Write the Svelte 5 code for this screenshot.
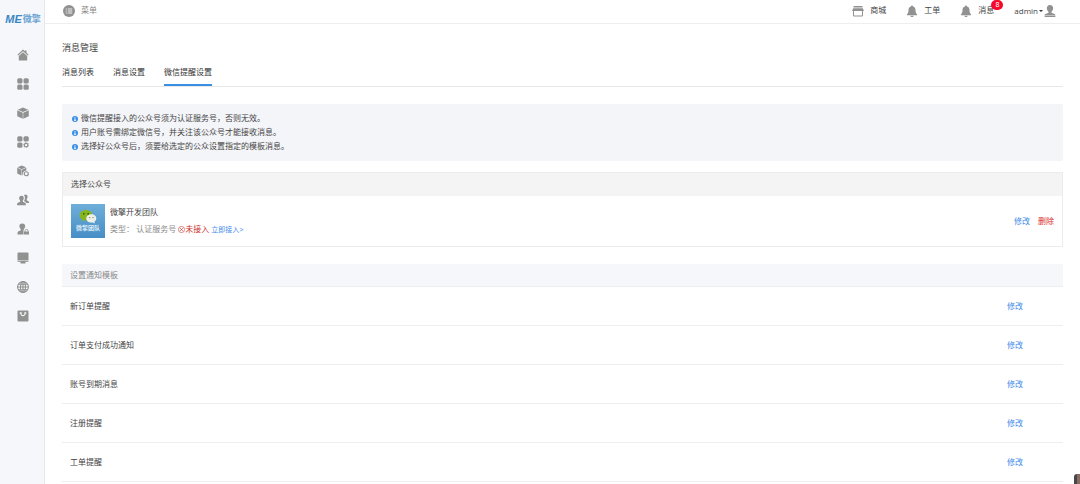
<script lang="ts">
	let activeTab = $state(2);
	let menuOpen = $state(false);

	const tabs = ['消息列表', '消息设置', '微信提醒设置'];
	const tips = [
		'微信提醒接入的公众号须为认证服务号，否则无效。',
		'用户账号需绑定微信号，并关注该公众号才能接收消息。',
		'选择好公众号后，须要给选定的公众设置指定的模板消息。'
	];
	const templates = ['新订单提醒', '订单支付成功通知', '账号到期消息', '注册提醒', '工单提醒'];
	const navItems = [
		{ icon: 'home', label: '首页' },
		{ icon: 'grid', label: '平台' },
		{ icon: 'cube', label: '应用' },
		{ icon: 'grid-gear', label: '平台管理' },
		{ icon: 'cube-gear', label: '应用管理' },
		{ icon: 'users', label: '用户' },
		{ icon: 'user-lock', label: '权限' },
		{ icon: 'screen', label: '系统' },
		{ icon: 'globe', label: '站点' },
		{ icon: 'bag', label: '商城' }
	];
</script>

{#snippet icon(name: string)}
	<svg class="icon" viewBox="0 0 24 24" fill="currentColor" aria-hidden="true">
		{#if name === 'home'}
			<path d="M12 1 0.8 11.4l1.7 1.8L12 4.4l9.5 8.8 1.7-1.8-4.2-3.9V3h-3v1.7z" />
			<path d="M12 6.6 3.6 14.2V23h16.8v-8.8z" />
		{:else if name === 'grid' || name === 'grid-gear'}
			<rect x="0.5" y="0.5" width="10.5" height="10.5" rx="3" />
			<rect x="13" y="0.5" width="10.5" height="10.5" rx="3" />
			<rect x="0.5" y="13" width="10.5" height="10.5" rx="3" />
			{#if name === 'grid'}
				<rect x="13" y="13" width="10.5" height="10.5" rx="3" />
			{:else}
				<circle cx="18.2" cy="18.2" r="3.6" fill="none" stroke="currentColor" stroke-width="2.4" />
				<circle cx="18.2" cy="18.2" r="5.2" fill="none" stroke="currentColor" stroke-width="1.5" stroke-dasharray="2.7 2.75" />
			{/if}
		{:else if name === 'cube'}
			<path d="M12 1 22.5 5.4 12 10 1.500 5.400z" />
			<path d="M0.500 6.500l11 4.800V23.500L0.500 18.500z" />
			<path d="M23.500 6.500l-11 4.800V23.500L23.500 18.500z" />
		{:else if name === 'cube-gear'}
			<path d="M9.500 1 18 4.700l-8.500 3.900L1 4.700z" />
			<path d="M0.500 5.700l8.500 3.800v11.300l-8.500-4z" />
			<path d="M18.600 5.700 9.900 9.500v10.900l1.600-.6a6.500 6.500 0 0 1 7.100-8.200z" />
			<circle cx="18.500" cy="17.500" r="4" fill="none" stroke="currentColor" stroke-width="2.400" />
		{:else if name === 'users'}
			<path d="M14 2.500c3-3 7.500-.8 7.200 3.500-.1 2-1 3.400-1.800 4.400v2l3.600 2.100c.8.600 1 1.600 1 3.500h-5.500c-.6-1.800-2.400-2.900-4.500-4 2.500-3.700 2.700-8.300 0-11.500z" />
			<path d="M9 3.500c3.200 0 4.800 2.300 4.600 5.200-.1 2-1 3.600-1.900 4.600v2l4.300 2c1.400.7 1.800 2 1.800 5.200H0c0-3.200.5-4.500 1.900-5.200l4.300-2v-2c-.9-1-1.800-2.600-1.900-4.600C4.200 5.800 5.800 3.500 9 3.500z" />
		{:else if name === 'user-lock'}
			<path d="M10.500 1c4 0 6 2.600 5.800 6-.2 2.500-1.500 4.300-2.900 5.500v1.400L13 15v8H1c0-3.600.2-5.400 2-6.300l4.700-2.200v-2C6.300 11.300 5 9.500 4.800 7 4.600 3.600 6.500 1 10.500 1z" />
			<path d="M14 17h10v6H14z" />
			<path d="M16 17.500v-1.700a3 3 0 0 1 6 0v1.700" fill="none" stroke="currentColor" stroke-width="1.6" />
		{:else if name === 'screen'}
			<path d="M2.500 1h19A1.500 1.500 0 0 1 23 2.500V16H1V2.500A1.500 1.500 0 0 1 2.500 1z" />
			<path d="M1 17h22v2.500h-6V23H7v-3.500H1z" />
		{:else if name === 'globe'}
			<g fill="none" stroke="currentColor" stroke-width="2.2">
				<circle cx="12" cy="12" r="10.8" />
				<ellipse cx="12" cy="12" rx="5" ry="10.8" />
				<path d="M12 1v22M1 12h22M3.500 6.500h17M3.500 17.500h17" />
			</g>
		{:else if name === 'bag'}
			<path fill-rule="evenodd" d="M3 1h18a2 2 0 0 1 2 2v18a2 2 0 0 1-2 2H3a2 2 0 0 1-2-2V3a2 2 0 0 1 2-2zm2.500 3.500v3h1.300c.5 3 2.500 4.800 5.200 4.800s4.700-1.800 5.200-4.800h1.300v-3h-4v3h.7c-.4 1.600-1.500 2.600-3.200 2.600S9.200 9.100 8.800 7.500h.7v-3z" />
		{:else if name === 'menu'}
			<circle cx="12" cy="12" r="12" />
			<path d="M5.500 8h2M9.500 8h9M5.500 12h2M9.500 12h9M5.500 16h2M9.500 16h9" stroke="#fff" stroke-width="1.7" />
		{:else if name === 'shop'}
			<path d="M3 2h18v3H3z" />
			<path d="M2.500 6.500h19L24 12H0z" />
			<path d="M3 12v10h18V12" fill="none" stroke="currentColor" stroke-width="2" />
		{:else if name === 'bell'}
			<path d="M12 1c1.400 0 2 .9 2 2 3.500 1 5 3.300 5 7 0 4.500.8 6.500 3 8.500v2H2v-2c2.200-2 3-4 3-8.500 0-3.700 1.500-6 5-7 0-1.100.6-2 2-2z" />
			<path d="M8.500 21.500h7c-.4 1.600-1.600 2.500-3.500 2.500s-3.100-.9-3.500-2.500z" />
		{:else if name === 'person'}
			<path d="M12 0c4 0 6.300 2.700 6.300 6.600 0 3-1.500 5.400-3.300 6.700v2.200l6 2.500c1.400.7 1.800 1.600 1.800 3H1.200c0-1.400.4-2.300 1.800-3l6-2.500v-2.200C7.200 12 5.700 9.600 5.700 6.600 5.700 2.700 8 0 12 0z" />
			<path d="M1.200 21.800h21.600V24H1.200z" />
		{:else if name === 'info'}
			<circle cx="12" cy="12" r="12" />
			<path d="M10 4.500h4v3.300h-4zM9 10h5v7h1.500v2.500h-7V17H10v-4.500H9z" fill="#fff" />
		{:else if name === 'wrong'}
			<circle cx="12" cy="12" r="10.5" fill="none" stroke="currentColor" stroke-width="2" />
			<path d="M7.500 7.500l9 9M16.500 7.500l-9 9" stroke="currentColor" stroke-width="2.4" />
		{/if}
	</svg>
{/snippet}

<div class="layout">
	<aside class="sidebar">
		<a class="logo" href="#home"><b>ME</b><span>微擎</span></a>
		<nav>
			{#each navItems as item}
				<a href="#{item.icon}" aria-label={item.label}>{@render icon(item.icon)}</a>
			{/each}
		</nav>
	</aside>

	<div class="page">
		<header class="topbar">
			<button class="menu-btn" onclick={() => (menuOpen = !menuOpen)}>
				{@render icon('menu')}菜单
			</button>
			<div class="top-links">
				<a href="#shop">{@render icon('shop')}商城</a>
				<a href="#order">{@render icon('bell')}工单</a>
				<a class="with-badge" href="#message">{@render icon('bell')}消息<span class="badge">8</span></a>
				<button class="account">admin<i class="caret"></i>{@render icon('person')}</button>
			</div>
		</header>

		<main>
			<h1>消息管理</h1>
			<div class="tabs" role="tablist">
				{#each tabs as tab, i}
					<button role="tab" aria-selected={activeTab === i} class:active={activeTab === i} onclick={() => (activeTab = i)}>{tab}</button>
				{/each}
			</div>

			<ul class="tips">
				{#each tips as tip}
					<li>{@render icon('info')}{tip}</li>
				{/each}
			</ul>

			<section class="panel">
				<h2>选择公众号</h2>
				<div class="panel-body">
					<div class="avatar">
						<svg viewBox="0 0 34 20" aria-hidden="true">
							<path d="M15 6c3.700 0 6.500 2.300 6.500 5.200s-2.800 5.200-6.500 5.200l-2-.3-2.600 1.400.6-2.300c-1.600-1-2.500-2.400-2.500-4C8.500 8.300 11.300 6 15 6z" fill="#86b51f" />
							<circle cx="12.8" cy="9.8" r=".9" fill="#36530d" />
							<circle cx="17.2" cy="9.8" r=".9" fill="#36530d" />
							<path d="M20.300 10.300c2.800 0 5 1.900 5 4.200 0 1.300-.8 2.500-1.900 3.200l.4 1.700-2-1-1.500.2c-2.800 0-5-1.800-5-4.100s2.200-4.200 5-4.200z" fill="#eef0e8" />
							<circle cx="18.7" cy="13.6" r=".7" fill="#777" />
							<circle cx="22" cy="13.6" r=".7" fill="#777" />
						</svg>
						<span>微擎团队</span>
					</div>
					<div class="info">
						<p>微擎开发团队</p>
						<p class="meta">
							类型： 认证服务号 <span class="fail">{@render icon('wrong')}未接入</span>
							<a href="#connect">立即接入&gt;</a>
						</p>
					</div>
					<div class="actions">
						<a href="#edit">修改</a>
						<a class="danger" href="#delete">删除</a>
					</div>
				</div>
			</section>

			<table class="templates">
				<thead>
					<tr><th colspan="2">设置通知模板</th></tr>
				</thead>
				<tbody>
					{#each templates as name}
						<tr>
							<td>{name}</td>
							<td class="op"><a href="#edit">修改</a></td>
						</tr>
					{/each}
				</tbody>
			</table>
		</main>
	</div>
	<div class="float-widget"></div>
</div>

<style>
	:global(body) {
		background: #fff;
	}
	.layout {
		display: flex;
		min-height: 100vh;
		font-family: 'Liberation Sans', 'Noto Sans CJK SC', sans-serif;
		font-size: 8px;
		line-height: 14px;
		color: #444;
	}
	a {
		color: #428bea;
		text-decoration: none;
	}
	button {
		border: 0;
		padding: 0;
		background: none;
		font: inherit;
		color: inherit;
		cursor: pointer;
	}
	.icon {
		display: block;
		flex: none;
		width: 12px;
		height: 12px;
		color: #919191;
	}

	/* sidebar */
	.sidebar {
		box-sizing: border-box;
		flex: none;
		width: 45px;
		padding-left: 2px;
		background: #f5f7fa;
		border-right: 1px solid #e4e7ed;
	}
	.logo {
		display: flex;
		align-items: center;
		justify-content: center;
		gap: 1px;
		height: 38px;
		color: #3a87c4;
	}
	.logo b {
		font-size: 11px;
		font-style: italic;
	}
	.logo span {
		font-size: 9px;
		font-weight: 700;
		color: #6ba4d3;
	}
	nav {
		display: flex;
		flex-direction: column;
		align-items: center;
		gap: 17px;
		padding-top: 11px;
	}

	/* top bar */
	.page {
		flex: 1;
		min-width: 0;
	}
	.topbar {
		display: flex;
		align-items: center;
		justify-content: space-between;
		box-sizing: border-box;
		height: 24px;
		padding: 0 24px 2px 18px;
		border-bottom: 1px solid #eee;
	}
	.menu-btn {
		display: flex;
		align-items: center;
		gap: 6px;
		color: #888;
	}
	.top-links {
		display: flex;
		align-items: center;
		gap: 20px;
	}
	.top-links a,
	.account {
		display: flex;
		align-items: center;
		gap: 6px;
		color: #444;
	}
	.with-badge {
		position: relative;
	}
	.badge {
		position: absolute;
		top: -4px;
		right: -9px;
		width: 12px;
		border-radius: 5px;
		background: #f5082c;
		color: #fff;
		font-size: 7px;
		line-height: 10px;
		text-align: center;
	}
	.top-links .account {
		gap: 1px;
		font-family: 'Open Sans', sans-serif;
	}
	.caret {
		border: 2px solid transparent;
		border-top-color: #333;
		border-bottom: 0;
	}

	/* content */
	main {
		padding: 17px 17px 0;
	}
	h1 {
		margin: 0;
		font-size: 9px;
		font-weight: 400;
	}
	.tabs {
		display: flex;
		gap: 19px;
		margin-top: 7px;
		border-bottom: 1px solid #e8e8e8;
	}
	.tabs button {
		padding: 4px 0;
		border-bottom: 2px solid transparent;
		color: #333;
	}
	.tabs button.active {
		border-bottom-color: #3a8ee6;
	}
	.tips {
		margin: 17px 0 0;
		padding: 8px 10px 7px;
		background: #f4f5f9;
		border-radius: 2px;
		list-style: none;
	}
	.tips li {
		display: flex;
		align-items: center;
		gap: 3px;
	}
	.tips .icon {
		width: 6px;
		height: 6px;
		color: #3a8ee6;
	}

	.panel {
		margin-top: 11px;
		border: 1px solid #ececec;
	}
	.panel h2 {
		margin: 0;
		padding: 5px 8px 4px;
		background: #f4f4f4;
		font-size: 8px;
		font-weight: 400;
	}
	.panel-body {
		display: flex;
		align-items: center;
		padding: 8px;
	}
	.avatar {
		display: flex;
		flex-direction: column;
		width: 34px;
		height: 34px;
		background: linear-gradient(#6eaed9, #478ec6);
		color: #dcebf6;
		font-size: 6px;
		font-weight: 700;
		line-height: 8px;
		text-align: center;
	}
	.info {
		flex: 1;
		padding-left: 5px;
	}
	.info p {
		margin: 0;
		line-height: 17px;
	}
	.info .meta {
		display: flex;
		align-items: center;
		gap: 2px;
		color: #8c8c8c;
	}
	.meta a {
		font-size: 7px;
	}
	.fail {
		display: flex;
		align-items: center;
		color: #c9302c;
	}
	.fail .icon {
		width: 7px;
		height: 7px;
		color: inherit;
	}
	.actions {
		display: flex;
		gap: 8px;
		padding-top: 2px;
	}
	.actions .danger {
		color: #d9302c;
	}

	.templates {
		width: 100%;
		margin-top: 17px;
		border-collapse: collapse;
	}
	.templates th,
	.templates td {
		padding: 5px 8px 3px;
		border-bottom: 1px solid #eceef0;
		font-weight: 400;
		text-align: left;
	}
	.templates th {
		background: #f5f7fa;
		color: #888;
	}
	.templates td {
		padding: 13px 8px 11px;
	}
	.templates .op {
		padding-right: 40px;
		text-align: right;
	}

	.float-widget {
		position: fixed;
		right: 0;
		bottom: 0;
		width: 6px;
		height: 10px;
		border-radius: 3px 0 0 0;
		background: linear-gradient(90deg, #45464f 50%, #8b6a60 50%);
	}
</style>
